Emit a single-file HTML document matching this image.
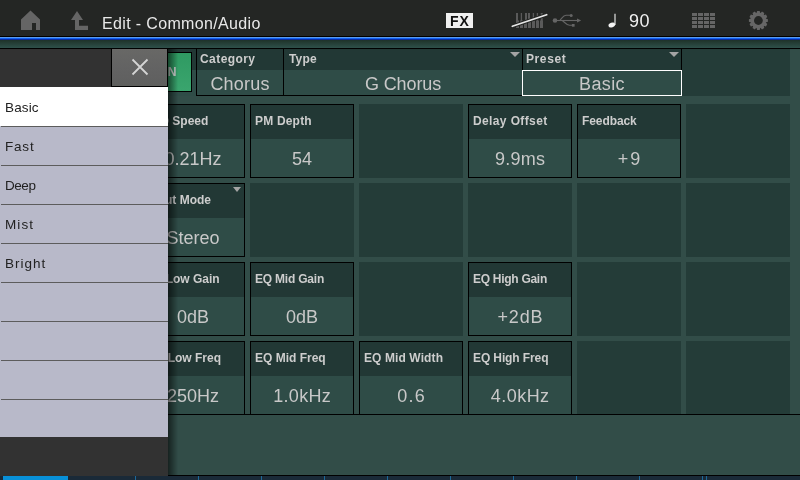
<!DOCTYPE html>
<html><head><meta charset="utf-8"><style>
*{margin:0;padding:0;box-sizing:border-box}
html,body{width:800px;height:480px;overflow:hidden;background:#324d48;font-family:"Liberation Sans",sans-serif}
.lb,.v,.title,.it{will-change:transform}
.a{position:absolute}
#top{left:0;top:0;width:800px;height:36px;background:#242624}
#l36{left:0;top:36px;width:800px;height:1px;background:#000}
#b1{left:0;top:37px;width:800px;height:1px;background:#5a9af0}
#b2{left:0;top:38px;width:800px;height:1px;background:#1060f0}
#b3{left:0;top:39px;width:800px;height:1px;background:#0a2aa0}
#grad{left:0;top:40px;width:800px;height:8px;background:linear-gradient(#1e3229,#2e504a)}
#l48{left:0;top:48px;width:800px;height:1px;background:#000}
#strip{left:0;top:49px;width:790px;height:47px;background:#223b37}
.title{left:102px;top:14px;color:#e8e8e8;font-size:16px;letter-spacing:0.35px;white-space:nowrap;line-height:20px}
.cell{position:absolute;width:104px;height:74px;border:1px solid #000;background:#2f4c47}
.cell .h{position:absolute;left:0;top:0;width:102px;height:34px;background:#223835}
.lb{position:absolute;font-weight:bold;font-size:12px;color:#cdcdcd;white-space:nowrap;line-height:14px}
.v{position:absolute;text-align:center;font-size:18px;color:#c8c8c8;white-space:nowrap;line-height:20px}
.emp{position:absolute;width:104px;height:74px;background:#243c38}
.tri{position:absolute;width:0;height:0;border-left:5px solid transparent;border-right:5px solid transparent;border-top:5px solid #a4a4a4}
#bline{left:0;top:414px;width:800px;height:1px;background:#000}
#l475{left:0;top:475px;width:800px;height:1px;background:#000}
#tabs{left:0;top:476px;width:800px;height:4px;background:#1a2a38}
.tk{position:absolute;top:476px;width:1px;height:4px;background:#1d6898}
#pop{left:0;top:49px;width:168px;height:427px;background:#323232}
#shadow{left:168px;top:49px;width:10px;height:426px;background:linear-gradient(90deg,rgba(0,0,0,.55),rgba(0,0,0,0))}
#xbtn{left:111px;top:48px;width:57px;height:39px;border:1px solid #000;background:linear-gradient(#686866,#636363 50%,#616161 75%,#5e5f5d)}
.item{position:absolute;left:0;width:168px;height:39px;background:#b8b9c9}
.it{position:absolute;left:5px;font-size:13.5px;color:#222;line-height:16px}
.sep{position:absolute;left:1px;width:167px;height:1px;background:#5c5c5c}
</style></head><body>
<div id="top" class="a"></div><div id="l36" class="a"></div><div id="b1" class="a"></div><div id="b2" class="a"></div><div id="b3" class="a"></div><div id="grad" class="a"></div><div id="l48" class="a"></div>
<svg class="a" style="left:0;top:0" width="800" height="36">
<path d="M21 19.4 L30.5 10.5 L40 19.4 L40 30 L36 30 L36 23 L32 23 L32 30 L21 30 Z" fill="#656565"/>
<path d="M77 11 L83 20 L79 20 L79 25.8 L88 25.8 L88 30 L75 30 L75 20 L71 20 Z" fill="#656565"/>
</svg>
<div class="a title">Edit - Common/Audio</div>
<div class="a" style="left:446px;top:13px;width:27px;height:15px;background:#f0f0f0"></div>
<div class="a" style="left:446px;top:13px;width:27px;height:16px;font:bold 14px Liberation Sans;color:#111;text-align:center;line-height:16px;letter-spacing:1px;padding-left:1px;will-change:transform">FX</div>
<svg class="a" style="left:0;top:0" width="800" height="36">
<g fill="#5a5a5a"><rect x="516" y="20.5" width="3" height="7.5"/><rect x="516" y="13" width="2" height="8"/><rect x="520" y="20.5" width="3" height="7.5"/><rect x="520.75" y="13" width="1.3" height="8"/><rect x="524" y="20.5" width="3" height="7.5"/><rect x="525" y="13" width="2" height="8"/><rect x="528" y="20.5" width="3" height="7.5"/><rect x="528" y="13" width="2" height="8"/><rect x="532" y="20.5" width="3" height="7.5"/><rect x="532.75" y="13" width="1.3" height="8"/><rect x="536" y="20.5" width="3" height="7.5"/><rect x="536.75" y="13" width="1.3" height="8"/><rect x="540" y="20.5" width="3" height="7.5"/><rect x="540.75" y="13" width="2" height="8"/></g>
<path d="M512.3 26.3 L546.7 14.7" stroke="#242624" stroke-width="3.6" stroke-linecap="round"/>
<path d="M512.3 26.3 L546.7 14.7" stroke="#e6e6e6" stroke-width="1.7" stroke-linecap="round"/>
<g fill="#656565" stroke="#656565">
<circle cx="555" cy="20.5" r="2.3" stroke="none"/>
<path d="M556 20.5 L578 20.5" stroke-width="1.1" fill="none"/>
<path d="M581.2 20.5 L577 18.6 L577 22.4 Z" stroke="none"/>
<path d="M560 20.3 C562.5 17.5 563.5 15.3 566 15.3 L570.5 15.3" stroke-width="1.1" fill="none"/>
<circle cx="571.2" cy="15.4" r="1.5" stroke="none"/>
<path d="M562.5 20.7 C565 22.5 566.5 25.2 569.5 25.2 L572 25.2" stroke-width="1.1" fill="none"/>
<rect x="571.9" y="24" width="2.7" height="2.7" stroke="none"/>
</g>
<path d="M615 13.8 L615 25" stroke="#f4f4f4" stroke-width="1.1"/>
<ellipse cx="611.8" cy="25" rx="3.4" ry="2.3" transform="rotate(-20 611.8 25)" fill="#f4f4f4"/>
<g fill="#656565">
<rect x="692" y="13" width="5" height="3"/><rect x="692" y="17" width="5" height="3"/><rect x="692" y="21" width="5" height="3"/><rect x="692" y="25" width="5" height="3"/><rect x="698" y="13" width="5" height="3"/><rect x="698" y="17" width="5" height="3"/><rect x="698" y="21" width="5" height="3"/><rect x="698" y="25" width="5" height="3"/><rect x="704" y="13" width="5" height="3"/><rect x="704" y="17" width="5" height="3"/><rect x="704" y="21" width="5" height="3"/><rect x="704" y="25" width="5" height="3"/><rect x="710" y="13" width="5" height="3"/><rect x="710" y="17" width="5" height="3"/><rect x="710" y="21" width="5" height="3"/><rect x="710" y="25" width="5" height="3"/>
</g>
<g transform="translate(758.4 20.5)" fill="#666">
<circle r="7.9"/>
<path d="M-1.3 -9.5 L1.3 -9.5 L1.9 -7 L-1.9 -7 Z" transform="rotate(0)"/><path d="M-1.3 -9.5 L1.3 -9.5 L1.9 -7 L-1.9 -7 Z" transform="rotate(30)"/><path d="M-1.3 -9.5 L1.3 -9.5 L1.9 -7 L-1.9 -7 Z" transform="rotate(60)"/><path d="M-1.3 -9.5 L1.3 -9.5 L1.9 -7 L-1.9 -7 Z" transform="rotate(90)"/><path d="M-1.3 -9.5 L1.3 -9.5 L1.9 -7 L-1.9 -7 Z" transform="rotate(120)"/><path d="M-1.3 -9.5 L1.3 -9.5 L1.9 -7 L-1.9 -7 Z" transform="rotate(150)"/><path d="M-1.3 -9.5 L1.3 -9.5 L1.9 -7 L-1.9 -7 Z" transform="rotate(180)"/><path d="M-1.3 -9.5 L1.3 -9.5 L1.9 -7 L-1.9 -7 Z" transform="rotate(210)"/><path d="M-1.3 -9.5 L1.3 -9.5 L1.9 -7 L-1.9 -7 Z" transform="rotate(240)"/><path d="M-1.3 -9.5 L1.3 -9.5 L1.9 -7 L-1.9 -7 Z" transform="rotate(270)"/><path d="M-1.3 -9.5 L1.3 -9.5 L1.9 -7 L-1.9 -7 Z" transform="rotate(300)"/><path d="M-1.3 -9.5 L1.3 -9.5 L1.9 -7 L-1.9 -7 Z" transform="rotate(330)"/>
<circle r="4.4" fill="#242624"/>
</g>
</svg>
<div class="a" style="left:629px;top:11px;font-size:18px;color:#f0f0f0;letter-spacing:0.4px;line-height:20px">90</div>
<div id="strip" class="a"></div>
<div class="a" style="left:0;top:49px;width:682px;height:21px;background:#223835"></div>
<div class="a" style="left:0;top:70px;width:682px;height:26px;background:#2f4c47"></div>
<div class="a" style="left:682px;top:49px;width:108px;height:47px;background:#243c38"></div>
<div class="a" style="left:143px;top:52px;width:49px;height:40px;border:1px solid #000;background:linear-gradient(#2f9a62,#3aa56e)"></div>
<div class="a v" style="left:144px;top:64.5px;width:47px;font-weight:bold;font-size:12px;color:#d8d8d8;line-height:14px;letter-spacing:0px">ON</div>
<div class="a" style="left:196px;top:48px;width:88px;height:48px;border:1px solid #000"></div>
<div class="lb" style="left:200px;top:52px;letter-spacing:0.43px">Category</div>
<div class="v" style="left:197px;top:74px;width:86px;letter-spacing:0.2px">Chorus</div>
<div class="a" style="left:283px;top:48px;width:240px;height:48px;border:1px solid #000"></div>
<div class="lb" style="left:288.5px;top:52px;letter-spacing:0.17px">Type</div>
<div class="v" style="left:284px;top:74px;width:238px;letter-spacing:-0.1px">G Chorus</div>
<div class="tri" style="left:510px;top:52px"></div>
<div class="a" style="left:522px;top:48px;width:160px;height:48px;border:1px solid #000"></div>
<div class="lb" style="left:526px;top:52px;letter-spacing:0.6px">Preset</div>
<div class="v" style="left:523px;top:74px;width:158px;letter-spacing:0.35px">Basic</div>
<div class="tri" style="left:669px;top:52px"></div>
<div class="a" style="left:522px;top:70px;width:160px;height:26px;border:1px solid #fff"></div>
<div class="cell" style="left:141px;top:104px"><div class="h"></div><div class="lb" style="left:2.5px;top:9px;letter-spacing:0px">LFO Speed</div><div class="v" style="left:0;top:43.5px;width:102px;letter-spacing:0px;text-indent:0px">0.21Hz</div></div>
<div class="cell" style="left:250px;top:104px"><div class="h"></div><div class="lb" style="left:4px;top:9px;letter-spacing:0.19px">PM Depth</div><div class="v" style="left:0;top:43.5px;width:102px;letter-spacing:0px;text-indent:0px">54</div></div>
<div class="emp" style="left:359px;top:104px"></div>
<div class="cell" style="left:468px;top:104px"><div class="h"></div><div class="lb" style="left:4px;top:9px;letter-spacing:0.38px">Delay Offset</div><div class="v" style="left:0;top:43.5px;width:102px;letter-spacing:0.3px;text-indent:0.3px">9.9ms</div></div>
<div class="cell" style="left:577px;top:104px"><div class="h"></div><div class="lb" style="left:4px;top:9px;letter-spacing:-0.09px">Feedback</div><div class="v" style="left:0;top:43.5px;width:102px;letter-spacing:2.0px;text-indent:2.0px">+9</div></div>
<div class="emp" style="left:686px;top:104px"></div>
<div class="cell" style="left:141px;top:183px"><div class="h"></div><div class="lb" style="left:5px;top:9px;letter-spacing:0px">Input Mode</div><div class="v" style="left:0;top:43.5px;width:102px;letter-spacing:0px;text-indent:0px">Stereo</div><div class="tri" style="left:91px;top:3px;border-left-width:4.5px;border-right-width:4.5px"></div></div>
<div class="emp" style="left:250px;top:183px"></div>
<div class="emp" style="left:359px;top:183px"></div>
<div class="emp" style="left:468px;top:183px"></div>
<div class="emp" style="left:577px;top:183px"></div>
<div class="emp" style="left:686px;top:183px"></div>
<div class="cell" style="left:141px;top:262px"><div class="h"></div><div class="lb" style="left:2.5px;top:9px;letter-spacing:0px">EQ Low Gain</div><div class="v" style="left:0;top:43.5px;width:102px;letter-spacing:0px;text-indent:0px">0dB</div></div>
<div class="cell" style="left:250px;top:262px"><div class="h"></div><div class="lb" style="left:4px;top:9px;letter-spacing:-0.21px">EQ Mid Gain</div><div class="v" style="left:0;top:43.5px;width:102px;letter-spacing:0px;text-indent:0px">0dB</div></div>
<div class="emp" style="left:359px;top:262px"></div>
<div class="cell" style="left:468px;top:262px"><div class="h"></div><div class="lb" style="left:4px;top:9px;letter-spacing:-0.28px">EQ High Gain</div><div class="v" style="left:0;top:43.5px;width:102px;letter-spacing:0.8px;text-indent:0.8px">+2dB</div></div>
<div class="emp" style="left:577px;top:262px"></div>
<div class="emp" style="left:686px;top:262px"></div>
<div class="cell" style="left:141px;top:341px"><div class="h"></div><div class="lb" style="left:4.5px;top:9px;letter-spacing:0px">EQ Low Freq</div><div class="v" style="left:0;top:43.5px;width:102px;letter-spacing:0px;text-indent:0px">250Hz</div></div>
<div class="cell" style="left:250px;top:341px"><div class="h"></div><div class="lb" style="left:4px;top:9px;letter-spacing:0px">EQ Mid Freq</div><div class="v" style="left:0;top:43.5px;width:102px;letter-spacing:0.3px;text-indent:0.3px">1.0kHz</div></div>
<div class="cell" style="left:359px;top:341px"><div class="h"></div><div class="lb" style="left:4px;top:9px;letter-spacing:0.1px">EQ Mid Width</div><div class="v" style="left:0;top:43.5px;width:102px;letter-spacing:1.2px;text-indent:1.2px">0.6</div></div>
<div class="cell" style="left:468px;top:341px"><div class="h"></div><div class="lb" style="left:4px;top:9px;letter-spacing:-0.11px">EQ High Freq</div><div class="v" style="left:0;top:43.5px;width:102px;letter-spacing:0.45px;text-indent:0.45px">4.0kHz</div></div>
<div class="emp" style="left:577px;top:341px"></div>
<div class="emp" style="left:686px;top:341px"></div>
<div id="bline" class="a"></div><div id="l475" class="a"></div><div id="tabs" class="a"></div>
<div class="a" style="left:3px;top:476px;width:65px;height:4px;background:#0890d8"></div>
<div class="tk" style="left:135px"></div>
<div class="tk" style="left:198px"></div>
<div class="tk" style="left:261px"></div>
<div class="tk" style="left:324px"></div>
<div class="tk" style="left:387px"></div>
<div class="tk" style="left:450px"></div>
<div class="tk" style="left:513px"></div>
<div class="tk" style="left:576px"></div>
<div class="tk" style="left:639px"></div>
<div class="tk" style="left:702px"></div>
<div class="tk" style="left:706px"></div>
<div id="pop" class="a"></div><div id="shadow" class="a"></div><div id="xbtn" class="a"></div>
<svg class="a" style="left:0;top:0" width="170" height="90"><path d="M132.5 59.5 L147.5 74.5 M147.5 59.5 L132.5 74.5" stroke="#d4d4d4" stroke-width="1.8"/></svg>
<div class="item" style="top:87px;height:39px;background:#ffffff"><div class="it" style="top:12.5px;letter-spacing:0.15px">Basic</div></div>
<div class="item" style="top:126px;height:39px;background:#b8b9c9"><div class="it" style="top:12.5px;letter-spacing:0.8px">Fast</div></div>
<div class="item" style="top:165px;height:39px;background:#b8b9c9"><div class="it" style="top:12.5px;letter-spacing:-0.45px">Deep</div></div>
<div class="item" style="top:204px;height:39px;background:#b8b9c9"><div class="it" style="top:12.5px;letter-spacing:1.1px">Mist</div></div>
<div class="item" style="top:243px;height:39px;background:#b8b9c9"><div class="it" style="top:12.5px;letter-spacing:1.0px">Bright</div></div>
<div class="item" style="top:282px;height:39px;background:#b8b9c9"><div class="it" style="top:12.5px;letter-spacing:0px"></div></div>
<div class="item" style="top:321px;height:39px;background:#b8b9c9"><div class="it" style="top:12.5px;letter-spacing:0px"></div></div>
<div class="item" style="top:360px;height:39px;background:#b8b9c9"><div class="it" style="top:12.5px;letter-spacing:0px"></div></div>
<div class="item" style="top:399px;height:38px;background:#b8b9c9"><div class="it" style="top:12.5px;letter-spacing:0px"></div></div>
<div class="sep a" style="top:126px"></div>
<div class="sep a" style="top:165px"></div>
<div class="sep a" style="top:204px"></div>
<div class="sep a" style="top:243px"></div>
<div class="sep a" style="top:282px"></div>
<div class="sep a" style="top:321px"></div>
<div class="sep a" style="top:360px"></div>
<div class="sep a" style="top:399px"></div>
</body></html>
